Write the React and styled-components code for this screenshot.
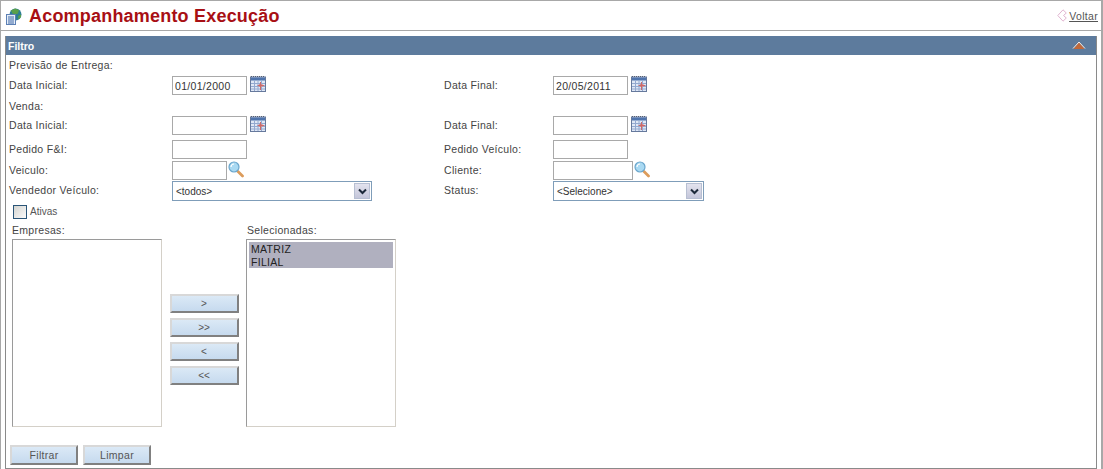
import styled, { createGlobalStyle } from "styled-components";

const GlobalStyle = createGlobalStyle`
  html, body {
    margin: 0;
    padding: 0;
    background: #fff;
  }
  body {
    font-family: "Liberation Sans", Arial, sans-serif;
    font-size: 10.5px;
    color: #444;
  }
`;

function PageIcon() {
  return (
    <svg width="17" height="17" viewBox="0 0 17 17">
      <circle cx="10.500" cy="6.500" r="6" fill="#2c7f95" />
      <path d="M6 2.500l4-2 4 1.500-1 3.500-3 1-2.500-1zM13 8l3-1.500 0 2.500-2.500 2.500z" fill="#5aa04a" />
      <path d="M5 10l1-4h3l-1 4z" fill="#0f5468" />
      <rect x="1.500" y="6.500" width="9" height="10" fill="#e6eef8" stroke="#5c80b5" />
      <path d="M3 9h6M3 11h6M3 13h6M3 15h6" stroke="#3f68a8" />
    </svg>
  );
}

function CalendarIcon() {
  return (
    <svg width="16" height="16" viewBox="0 0 16 16">
      <path d="M1 .500h14" stroke="#444" strokeDasharray="1 1" />
      <rect x="0.500" y="1" width="15" height="14.500" fill="#dfe7f5" stroke="#66799c" />
      <rect x="1" y="1.500" width="14" height="3" fill="#4f74ad" />
      <path d="M4.500 5v10M8 5v10M11.500 5v10M1 7.500h14M1 10.500h14M1 13h14" stroke="#93a9d0" />
      <rect x="9" y="8" width="3.500" height="3" fill="#d98a8a" />
      <path d="M10.500 6v8M7.500 9.500h7" stroke="#c96a6a" />
    </svg>
  );
}

function SearchIcon() {
  return (
    <svg width="16" height="17" viewBox="0 0 16 17">
      <path d="M10 10.500l4.500 4.500" stroke="#dc9c5c" strokeWidth="2.800" strokeLinecap="round" />
      <circle cx="6" cy="6" r="5" fill="#a9d9f2" stroke="#6aa6cc" strokeWidth="1.200" />
      <path d="M3 6a3 3 0 0 1 3-3" stroke="#fff" strokeWidth="1.200" fill="none" />
    </svg>
  );
}

function BackIcon() {
  return (
    <svg width="10" height="13" viewBox="0 0 10 13">
      <path d="M6 .800L.800 6.500 6 12.200 9.300 9 6.500 6.500 9.300 4z" fill="none" stroke="#e0b4d0" />
    </svg>
  );
}

function CollapseIcon() {
  return (
    <svg width="14" height="9" viewBox="0 0 14 9">
      <path d="M7 1.500L1.500 8h11z" fill="#c0683a" />
      <path d="M1 7.500L7 1l6 6.500" fill="none" stroke="#f4ede6" />
    </svg>
  );
}

function DateField({ value, height }) {
  return (
    <FieldRow $height={height} $gap={3}>
      <TextInput $width={75} defaultValue={value} />
      <CalendarIcon />
    </FieldRow>
  );
}

function SearchField({ width }) {
  return (
    <FieldRow $height={20} $gap={1}>
      <TextInput $width={width} />
      <SearchIcon />
    </FieldRow>
  );
}

function ComboField({ value, width }) {
  return (
    <Combo $width={width}>
      <ComboText>{value}</ComboText>
      <ComboArrow>
        <svg width="9" height="7" viewBox="0 0 9 7">
          <path d="M1 1.500l3.500 3.500 3.500-3.500" fill="none" stroke="#1d2a3a" strokeWidth="2" />
        </svg>
      </ComboArrow>
    </Combo>
  );
}

export default function App() {
  return (
    <>
      <GlobalStyle />
      <Page>
        <TitleBar>
          <TitleGroup>
            <PageIcon />
            <Title>Acompanhamento Execução</Title>
          </TitleGroup>
          <BackLink href="#">
            <BackIcon />
            <span>Voltar</span>
          </BackLink>
        </TitleBar>
        <Panel>
          <PanelHeader>
            <span>Filtro</span>
            <CollapseIcon />
          </PanelHeader>
          <FormGrid>
            <SectionLabel $height={21}>Previsão de Entrega:</SectionLabel>

            <Label>Data Inicial:</Label>
            <DateField value="01/01/2000" height={20} />
            <Label>Data Final:</Label>
            <DateField value="20/05/2011" height={20} />

            <SectionLabel $height={20}>Venda:</SectionLabel>

            <Label>Data Inicial:</Label>
            <DateField height={24} />
            <Label>Data Final:</Label>
            <DateField height={24} />

            <Label>Pedido F&amp;I:</Label>
            <FieldRow $height={21}><TextInput $width={75} /></FieldRow>
            <Label>Pedido Veículo:</Label>
            <FieldRow $height={21}><TextInput $width={75} /></FieldRow>

            <Label>Veiculo:</Label>
            <SearchField width={55} />
            <Label>Cliente:</Label>
            <SearchField width={80} />

            <Label>Vendedor Veículo:</Label>
            <ComboField value="<todos>" width={200} />
            <Label>Status:</Label>
            <ComboField value="<Selecione>" width={151} />
          </FormGrid>

          <CheckRow>
            <CheckBox />
            <span>Ativas</span>
          </CheckRow>

          <Transfer>
            <ListColumn>
              <ListTitle>Empresas:</ListTitle>
              <ListBox />
            </ListColumn>
            <MoveButtons>
              <SmallButton>&gt;</SmallButton>
              <SmallButton>&gt;&gt;</SmallButton>
              <SmallButton>&lt;</SmallButton>
              <SmallButton>&lt;&lt;</SmallButton>
            </MoveButtons>
            <ListColumn>
              <ListTitle $inset={1}>Selecionadas:</ListTitle>
              <ListBox>
                <ListOption>MATRIZ</ListOption>
                <ListOption>FILIAL</ListOption>
              </ListBox>
            </ListColumn>
          </Transfer>

          <Actions>
            <ActionButton>Filtrar</ActionButton>
            <ActionButton>Limpar</ActionButton>
          </Actions>
        </Panel>
      </Page>
    </>
  );
}

const Page = styled.div`
  width: 1103px;
  height: 469px;
  box-sizing: border-box;
  border: 1px solid #a8a8a8;
  border-bottom: 0;
  border-right-width: 2px;
`;

const TitleBar = styled.div`
  height: 29px;
  display: flex;
  align-items: center;
  justify-content: space-between;
  padding: 0 3px 0 4px;
  border-bottom: 1px solid #a8a8a8;
`;

const TitleGroup = styled.div`
  display: flex;
  align-items: center;
  gap: 7px;
  padding-top: 1px;
`;

const Title = styled.h1`
  margin: 0;
  font-size: 18px;
  font-weight: bold;
  letter-spacing: 0.2px;
  color: #a80f14;
`;

const BackLink = styled.a`
  display: flex;
  align-items: center;
  gap: 2px;
  color: #555;
  font-size: 10.5px;
  letter-spacing: 0.3px;
  span {
    text-decoration: underline;
  }
`;

const Panel = styled.section`
  margin: 5px 4px 0 4px;
  height: 432px;
  border: 1px solid #8a8a8a;
  border-top: 0;
  display: flex;
  flex-direction: column;
`;

const PanelHeader = styled.header`
  height: 19px;
  flex: none;
  display: flex;
  align-items: center;
  justify-content: space-between;
  padding: 0 10px 0 2px;
  background: #5d7b9d;
  color: #fff;
  font-weight: bold;
  font-size: 10.5px;
`;

const FormGrid = styled.div`
  display: grid;
  grid-template-columns: 163px 272px 109px 1fr;
  grid-auto-rows: min-content;
  padding-left: 3px;
`;

const SectionLabel = styled.div`
  grid-column: 1 / -1;
  height: ${(p) => p.$height}px;
  line-height: 20px;
  letter-spacing: 0.3px;
`;

const Label = styled.div`
  line-height: 18px;
  letter-spacing: 0.3px;
  white-space: nowrap;
`;

const FieldRow = styled.div`
  display: flex;
  align-items: flex-start;
  gap: ${(p) => p.$gap || 0}px;
  height: ${(p) => p.$height}px;
`;

const TextInput = styled.input`
  width: ${(p) => p.$width}px;
  height: 19px;
  box-sizing: border-box;
  margin: 0;
  padding: 0 2px;
  border: 1px solid #a9a9a9;
  font-family: inherit;
  font-size: 10.5px;
  letter-spacing: 0.3px;
  color: #333;
  outline: none;
`;

const Combo = styled.div`
  width: ${(p) => p.$width}px;
  height: 20px;
  box-sizing: border-box;
  display: flex;
  align-items: center;
  justify-content: space-between;
  padding: 0 1px 0 3px;
  border: 1px solid #7f9db9;
  background: #fff;
`;

const ComboText = styled.span`
  font-size: 10px;
  color: #333;
`;

const ComboArrow = styled.span`
  width: 16px;
  height: 16px;
  display: flex;
  align-items: center;
  justify-content: center;
  background: linear-gradient(#e3e3ee, #c4c6da);
  border: 1px solid #b7bfd2;
  box-sizing: border-box;
`;

const CheckRow = styled.div`
  display: flex;
  align-items: center;
  gap: 3px;
  height: 17px;
  margin: 2px 0 0 7px;
  font-size: 10px;
  color: #555;
`;

const CheckBox = styled.span`
  width: 14px;
  height: 14px;
  box-sizing: border-box;
  border: 1px solid #2a5578;
  background: linear-gradient(135deg, #d4d4d0, #fbfbfb);
`;

const Transfer = styled.div`
  display: flex;
  align-items: flex-start;
  margin: 4px 0 0 6px;
`;

const ListColumn = styled.div`
  display: flex;
  flex-direction: column;
  width: 150px;
`;

const ListTitle = styled.div`
  height: 15px;
  line-height: 13px;
  padding-left: ${(p) => p.$inset || 0}px;
  letter-spacing: 0.3px;
`;

const ListBox = styled.div`
  height: 188px;
  box-sizing: border-box;
  padding: 2px;
  border: 1px solid #9a9a9a;
  border-right-color: #d4d0c8;
  border-bottom-color: #d4d0c8;
`;

const ListOption = styled.div`
  height: 13px;
  line-height: 14px;
  padding-left: 2px;
  background: #b0b0bf;
  color: #222;
  font-size: 10.5px;
  letter-spacing: 0.3px;
`;

const MoveButtons = styled.div`
  width: 84px;
  display: flex;
  flex-direction: column;
  align-items: center;
  gap: 5px;
  margin-top: 70px;
`;

const SmallButton = styled.button`
  width: 69px;
  height: 19px;
  padding: 0;
  box-sizing: border-box;
  border: 2px solid;
  border-color: #d8d8d8 #808080 #808080 #d8d8d8;
  background: linear-gradient(#dbe9f6, #c6daee);
  font-family: inherit;
  font-size: 10px;
  color: #555;
`;

const Actions = styled.div`
  display: flex;
  gap: 5px;
  margin: 18px 0 0 4px;
`;

const ActionButton = styled(SmallButton)`
  width: 68px;
  height: 20px;
  font-size: 10.5px;
  letter-spacing: 0.3px;
`;
